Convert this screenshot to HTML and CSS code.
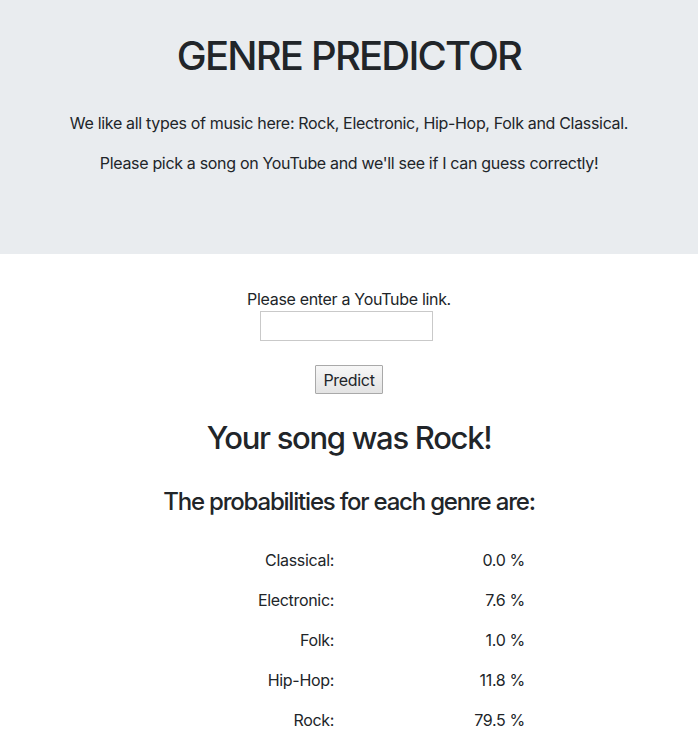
FILE: index.html
```html
<!DOCTYPE html>
<html lang="en">
<head>
<meta charset="utf-8">
<title>Genre Predictor</title>
<link rel="stylesheet" href="styles.css">
</head>
<body>
<header class="jumbotron">
  <h1 class="title">GENRE PREDICTOR</h1>
  <p class="lead">We like all types of music here: Rock, Electronic, Hip-Hop, Folk and Classical.</p>
  <p class="lead">Please pick a song on YouTube and we'll see if I can guess correctly!</p>
</header>
<main class="content">
  <form class="link-form">
    <label class="link-label" for="link">Please enter a YouTube link.</label>
    <input class="link-input" id="link" type="text">
    <button class="predict-btn" type="button">Predict</button>
  </form>
  <h2 class="result">Your song was Rock!</h2>
  <h3 class="subtitle">The probabilities for each genre are:</h3>
  <div class="probs">
    <div class="genre">Classical:</div><div class="value">0.0 %</div>
    <div class="genre">Electronic:</div><div class="value">7.6 %</div>
    <div class="genre">Folk:</div><div class="value">1.0 %</div>
    <div class="genre">Hip-Hop:</div><div class="value">11.8 %</div>
    <div class="genre">Rock:</div><div class="value">79.5 %</div>
  </div>
</main>
</body>
</html>
```
FILE: styles.css
```css
html, body {
  margin: 0;
  padding: 0;
}
body {
  font-family: Inter, "Liberation Sans", sans-serif;
  font-size: 16px;
  line-height: 1.5;
  letter-spacing: -0.32px;
  color: #212529;
  background: #fff;
}
.jumbotron {
  background: #e9ecef;
  padding: 32px 16px 63px;
  margin-bottom: 33px;
  text-align: center;
}
.title {
  font-size: 40px;
  font-weight: 500;
  line-height: 48px;
  letter-spacing: -1.8px;
  margin: 0 0 31px;
}
.lead {
  margin: 0 0 16px;
}
.content {
  text-align: center;
}
.link-form {
  display: flex;
  flex-direction: column;
  align-items: center;
}
.link-label {
  display: block;
  line-height: 24px;
}
.link-input {
  box-sizing: border-box;
  width: 173px;
  height: 30px;
  border: 1px solid #c9c9c9;
  background: #fff;
  margin: 0 5px 0 0;
}
.predict-btn {
  box-sizing: border-box;
  margin-top: 24px;
  height: 29px;
  padding: 0 7px;
  font-family: Inter, "Liberation Sans", sans-serif;
  font-size: 16px;
  letter-spacing: -0.32px;
  color: #212529;
  border: 1px solid #a9a9a9;
  border-radius: 1px;
  background: linear-gradient(#f7f7f7, #e3e3e3);
}
.result {
  font-size: 31px;
  font-weight: 500;
  line-height: 38px;
  letter-spacing: -1.3px;
  margin: 25px 0 30px;
}
.subtitle {
  font-size: 24px;
  font-weight: 500;
  line-height: 29px;
  letter-spacing: -1.2px;
  margin: 0 0 24px;
}
.probs {
  display: grid;
  grid-template-columns: 161px 191px;
  grid-auto-rows: 40px;
  justify-content: center;
  align-items: center;
  text-align: right;
}
```
